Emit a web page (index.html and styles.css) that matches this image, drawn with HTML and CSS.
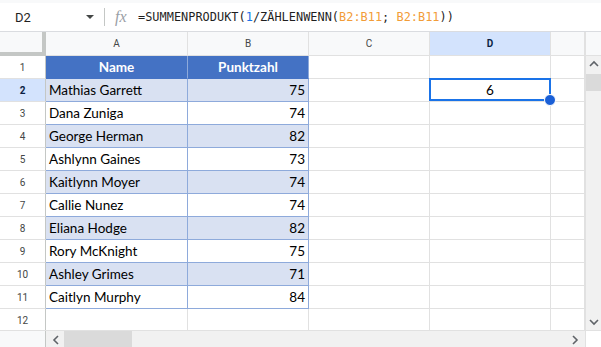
FILE: index.html
```html
<!DOCTYPE html>
<html lang="de">
<head>
  <meta charset="UTF-8" />
  <title>Tabelle</title>
  <link rel="stylesheet" href="styles.css">
</head>
<body>

  <!-- Formula bar -->
  <div class="formula-bar">
    <div class="name-box">D2</div>
    <span class="caret"></span>
    <span class="divider"></span>
    <span class="fx">fx</span>
    <div class="formula">=SUMMENPRODUKT(<span class="num">1</span>/ZÄHLENWENN(<span class="ref">B2:B11</span>; <span class="ref">B2:B11</span>))</div>
  </div>

  <!-- Grid -->
  <div class="sheet">
    <div class="cells">
      <div class="row head-row">
        <div class="corner"></div>
        <div class="col-head">A</div>
        <div class="col-head">B</div>
        <div class="col-head">C</div>
        <div class="col-head selected">D</div>
        <div class="col-head"></div>
      </div>

      <div class="row">
        <div class="row-head">1</div>
        <div class="cell t-head">Name</div>
        <div class="cell t-head">Punktzahl</div>
        <div class="cell"></div><div class="cell"></div><div class="cell"></div>
      </div>
      <div class="row">
        <div class="row-head selected">2</div>
        <div class="cell t band">Mathias Garrett</div>
        <div class="cell t band n">75</div>
        <div class="cell"></div><div class="cell active">6</div><div class="cell"></div>
      </div>
      <div class="row">
        <div class="row-head">3</div>
        <div class="cell t">Dana Zuniga</div>
        <div class="cell t n">74</div>
        <div class="cell"></div><div class="cell"></div><div class="cell"></div>
      </div>
      <div class="row">
        <div class="row-head">4</div>
        <div class="cell t band">George Herman</div>
        <div class="cell t band n">82</div>
        <div class="cell"></div><div class="cell"></div><div class="cell"></div>
      </div>
      <div class="row">
        <div class="row-head">5</div>
        <div class="cell t">Ashlynn Gaines</div>
        <div class="cell t n">73</div>
        <div class="cell"></div><div class="cell"></div><div class="cell"></div>
      </div>
      <div class="row">
        <div class="row-head">6</div>
        <div class="cell t band">Kaitlynn Moyer</div>
        <div class="cell t band n">74</div>
        <div class="cell"></div><div class="cell"></div><div class="cell"></div>
      </div>
      <div class="row">
        <div class="row-head">7</div>
        <div class="cell t">Callie Nunez</div>
        <div class="cell t n">74</div>
        <div class="cell"></div><div class="cell"></div><div class="cell"></div>
      </div>
      <div class="row">
        <div class="row-head">8</div>
        <div class="cell t band">Eliana Hodge</div>
        <div class="cell t band n">82</div>
        <div class="cell"></div><div class="cell"></div><div class="cell"></div>
      </div>
      <div class="row">
        <div class="row-head">9</div>
        <div class="cell t">Rory McKnight</div>
        <div class="cell t n">75</div>
        <div class="cell"></div><div class="cell"></div><div class="cell"></div>
      </div>
      <div class="row">
        <div class="row-head">10</div>
        <div class="cell t band">Ashley Grimes</div>
        <div class="cell t band n">71</div>
        <div class="cell"></div><div class="cell"></div><div class="cell"></div>
      </div>
      <div class="row">
        <div class="row-head">11</div>
        <div class="cell t">Caitlyn Murphy</div>
        <div class="cell t n">84</div>
        <div class="cell"></div><div class="cell"></div><div class="cell"></div>
      </div>
      <div class="row">
        <div class="row-head">12</div>
        <div class="cell"></div><div class="cell"></div><div class="cell"></div><div class="cell"></div><div class="cell"></div>
      </div>
    </div>

    <!-- Vertical scrollbar -->
    <div class="v-scroll">
      <div class="v-top"></div>
      <div class="v-track">
        <svg class="arrow" width="16" height="12" viewBox="0 0 16 12"><polyline points="4,8 8,4 12,8" fill="none" stroke="#5f6368" stroke-width="1.6"/></svg>
        <div class="v-thumb"></div>
        <div class="grow"></div>
        <svg class="arrow" width="16" height="12" viewBox="0 0 16 12"><polyline points="4,4 8,8 12,4" fill="none" stroke="#5f6368" stroke-width="1.6"/></svg>
      </div>
    </div>
  </div>

  <!-- Horizontal scrollbar -->
  <div class="h-scroll">
    <div class="h-left"></div>
    <div class="h-track">
      <svg class="arrow" width="16" height="17" viewBox="0 0 16 17"><polyline points="10,5 6,9 10,13" fill="none" stroke="#5f6368" stroke-width="1.6"/></svg>
      <div class="h-thumb"></div>
      <div class="grow"></div>
      <svg class="arrow" width="16" height="17" viewBox="0 0 16 17"><polyline points="6,5 10,9 6,13" fill="none" stroke="#5f6368" stroke-width="1.6"/></svg>
    </div>
    <div class="h-corner"></div>
  </div>

</body>
</html>
```

FILE: styles.css
```css
* {
  box-sizing: border-box;
}

body {
  margin: 0;
  width: 601px;
  height: 347px;
  overflow: hidden;
  background: #fff;
  font-family: Roboto, Arial, sans-serif;
  color: #1f1f1f;
}

/* Formula bar */
.formula-bar {
  height: 32px;
  display: flex;
  align-items: center;
  border-top: 3px solid #f8f9fa;
  border-bottom: 1px solid #dadce0;
  font-size: 13px;
}

.name-box {
  width: 84px;
  padding-left: 15px;
}

.caret {
  width: 0;
  height: 0;
  border-left: 4px solid transparent;
  border-right: 4px solid transparent;
  border-top: 4px solid #444746;
  margin-left: 2px;
}

.divider {
  width: 1px;
  height: 18px;
  background: #c4c7c5;
  margin-left: 10px;
}

.fx {
  font-family: "Liberation Serif", serif;
  font-style: italic;
  font-size: 16px;
  color: #9aa0a6;
  margin-left: 10px;
  width: 23px;
}

.formula {
  font-family: "DejaVu Sans Mono", monospace;
  font-size: 11.9px;
  letter-spacing: 0.02px;
  color: #1f1f1f;
}

.formula .num {
  color: #1a73e8;
}

.formula .ref {
  color: #f29c38;
}

/* Grid */
.sheet {
  display: flex;
  height: 298px;
  overflow: hidden;
}

.cells {
  width: 585px;
}

.row {
  display: grid;
  grid-template-columns: 46px 142px 121px 121px 121px 34px;
  height: 23px;
}

.head-row {
  height: 24px;
}

.corner {
  background: #f8f9fa;
  border-right: 4px solid #c4c7c5;
  border-bottom: 4px solid #c4c7c5;
}

.col-head,
.row-head {
  background: #f8f9fa;
  border-right: 1px solid #e1e1e1;
  border-bottom: 1px solid #e1e1e1;
  color: #444746;
  font-size: 10px;
  display: flex;
  align-items: center;
  justify-content: center;
}

.col-head.selected,
.row-head.selected {
  background: #d3e3fd;
  color: #0b1f44;
  font-weight: bold;
}

.row-head {
  background: #fff;
  border-right-color: #c4c7c5;
}

.cell {
  position: relative;
  border-right: 1px solid #e1e1e1;
  border-bottom: 1px solid #e1e1e1;
  font-family: Lato, "Noto Sans", sans-serif;
  font-size: 13.5px;
  color: #000;
  display: flex;
  align-items: center;
  padding: 0 3px;
  white-space: nowrap;
}

.cell.t {
  border-color: #8eaadb;
}

.cell.band {
  background: #d9e1f2;
}

.cell.n {
  justify-content: flex-end;
}

.cell.t-head {
  background: #4472c4;
  color: #fff;
  font-weight: bold;
  justify-content: center;
  border-right-color: #8eaadb;
  border-bottom-color: #4472c4;
}

.cell.active {
  justify-content: center;
  z-index: 2;
}

.cell.active::before {
  content: "";
  position: absolute;
  top: -1px;
  left: -1px;
  right: -1px;
  bottom: 0;
  border: 2px solid #1a73e8;
}

.cell.active::after {
  content: "";
  position: absolute;
  right: -6px;
  bottom: -5px;
  width: 10px;
  height: 10px;
  border-radius: 50%;
  background: #1a5fd6;
  border: 1px solid #fff;
}

/* Scrollbars */
.v-scroll {
  width: 16px;
  display: flex;
  flex-direction: column;
  border-left: 1px solid #e1e1e1;
}

.v-top {
  height: 24px;
  background: #f8f9fa;
  border-bottom: 1px solid #e1e1e1;
}

.v-track {
  flex: 1;
  background: #f1f1f1;
  display: flex;
  flex-direction: column;
  padding: 2px 0;
}

.v-thumb {
  height: 17px;
  margin-top: 4px;
  background: #dadada;
}

.grow {
  flex: 1;
}

.arrow {
  display: block;
  flex-shrink: 0;
}

.h-scroll {
  height: 17px;
  display: flex;
  border-top: 1px solid #e1e1e1;
}

.h-left {
  width: 46px;
  background: #f8f9fa;
  border-right: 1px solid #c4c7c5;
}

.h-track {
  width: 539px;
  background: #f1f1f1;
  display: flex;
  padding-left: 2px;
  padding-right: 2px;
}

.h-thumb {
  width: 68px;
  background: #dadada;
}

.h-corner {
  flex: 1;
  background: #fff;
  border-left: 1px solid #e1e1e1;
}
```
